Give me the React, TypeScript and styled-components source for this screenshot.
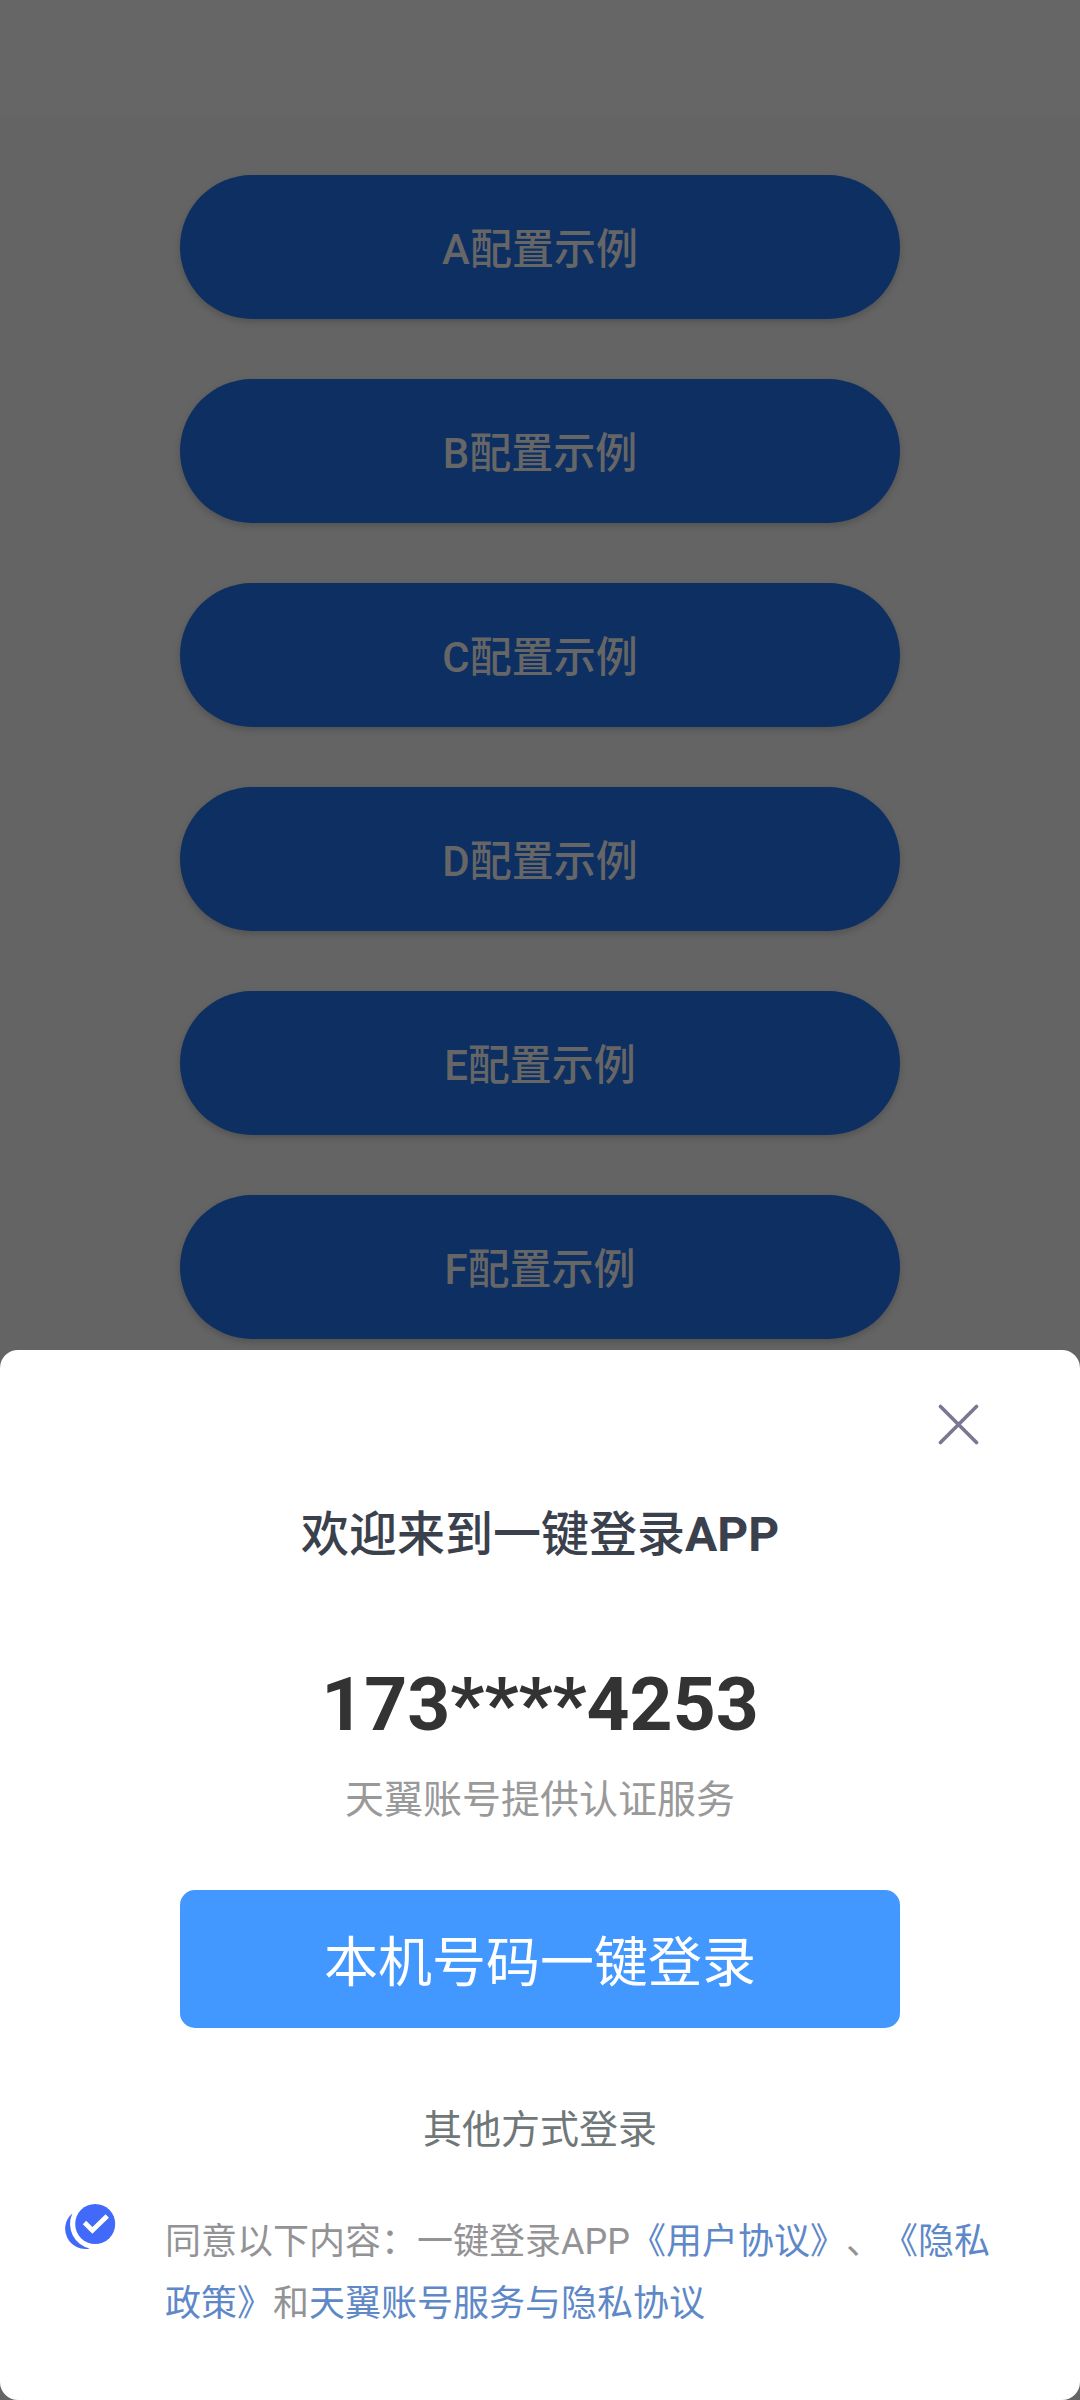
import React from "react";
import styled, { createGlobalStyle } from "styled-components";

const GlobalStyle = createGlobalStyle`
  * { box-sizing: border-box; }
  body {
    margin: 0;
    background: #646464;
    font-family: Roboto, "Noto Sans CJK SC", sans-serif;
  }
  button { font-family: inherit; border: 0; padding: 0; }
`;

const Screen = styled.div`
  width: 1080px;
  height: 2400px;
  overflow: hidden;
  display: flex;
  flex-direction: column;
  background: #646464;
`;

const StatusBar = styled.div`
  height: 115px;
  flex: none;
  background: #666666;
`;

const ConfigList = styled.main`
  height: 1235px;
  flex: none;
  padding-top: 60px;
  display: flex;
  flex-direction: column;
  align-items: center;
  gap: 60px;
`;

const ConfigButton = styled.button`
  width: 720px;
  height: 144px;
  flex: none;
  border-radius: 72px;
  background: #0e2f62;
  color: #666666;
  font-size: 42px;
  font-weight: 500;
  line-height: 50px;
  padding-top: 5px;
  box-shadow: 0 3px 7px rgba(0, 0, 0, 0.18);
`;

const SheetArea = styled.div`
  flex: 1;
  display: flex;
`;

const Sheet = styled.section`
  flex: 1;
  display: flex;
  flex-direction: column;
  align-items: center;
  background: #ffffff;
  border-radius: 18px;
`;

const SheetHeader = styled.header`
  width: 100%;
  height: 149px;
  padding: 54px 100px 0 0;
  display: flex;
  justify-content: flex-end;
`;

const CloseButton = styled.button`
  width: 42px;
  height: 42px;
  background: none;
  display: flex;
`;

const Title = styled.h1`
  margin: 0;
  height: 72px;
  font-size: 48px;
  line-height: 72px;
  font-weight: 500;
  color: #3b404d;
  white-space: nowrap;
`;

const Strong = styled.span`
  font-weight: 700;
`;

const PhoneNumber = styled.div`
  margin-top: 83px;
  height: 100px;
  font-size: 75px;
  line-height: 100px;
  font-weight: 700;
  color: #333333;
`;

const Provider = styled.div`
  margin-top: 16px;
  height: 60px;
  font-size: 39px;
  line-height: 60px;
  color: #999999;
`;

const LoginButton = styled.button`
  margin-top: 60px;
  width: 720px;
  height: 138px;
  flex: none;
  border-radius: 15px;
  background: #4398ff;
  color: #ffffff;
  font-size: 54px;
  line-height: 72px;
  padding-top: 9px;
`;

const OtherLogin = styled.button`
  margin-top: 72px;
  height: 60px;
  background: none;
  font-size: 39px;
  line-height: 60px;
  color: #6f7779;
`;

const Agreement = styled.div`
  width: 100%;
  margin-top: 44px;
  padding-left: 64px;
  display: flex;
  gap: 49px;
`;

const CheckBadge = styled.svg`
  width: 52px;
  height: 52px;
  flex: none;
`;

const AgreementText = styled.p`
  margin: 7px 0 0;
  font-size: 36px;
  line-height: 62px;
  color: #939396;
  white-space: nowrap;
  text-spacing-trim: space-all;
`;

const Link = styled.span`
  color: #5e88c7;
`;

const configs = ["A", "B", "C", "D", "E", "F"];

export default function App() {
  return (
    <>
      <GlobalStyle />
      <Screen lang="zh-CN">
        <StatusBar />
        <ConfigList>
          {configs.map((name) => (
            <ConfigButton key={name}>{name}配置示例</ConfigButton>
          ))}
        </ConfigList>
        <SheetArea>
          <Sheet>
            <SheetHeader>
              <CloseButton aria-label="关闭">
                <svg width="42" height="42" viewBox="0 0 42 42">
                  <path
                    d="M2.5 2.5 L38.5 38.5 M38.5 2.5 L2.5 38.5"
                    stroke="#7a7791"
                    strokeWidth="3.6"
                    strokeLinecap="round"
                  />
                </svg>
              </CloseButton>
            </SheetHeader>
            <Title>
              欢迎来到一键登录<Strong>APP</Strong>
            </Title>
            <PhoneNumber>173****4253</PhoneNumber>
            <Provider>天翼账号提供认证服务</Provider>
            <LoginButton>本机号码一键登录</LoginButton>
            <OtherLogin>其他方式登录</OtherLogin>
            <Agreement>
              <CheckBadge viewBox="0 0 52 52">
                <path
                  d="M8.3 9.6 A20 20 0 0 0 25.7 44.4 A25 25 0 0 1 8.3 9.6 Z"
                  fill="#4169fa"
                />
                <circle cx="31.2" cy="20" r="20" fill="#4169fa" />
                <path
                  d="M20.5 18.5 L28.4 26.4 L43.2 12"
                  fill="none"
                  stroke="#ffffff"
                  strokeWidth="4.8"
                />
              </CheckBadge>
              <AgreementText>
                同意以下内容：一键登录APP<Link>《用户协议》</Link>、<Link>《隐私</Link>
                <br />
                <Link>政策》</Link>和<Link>天翼账号服务与隐私协议</Link>
              </AgreementText>
            </Agreement>
          </Sheet>
        </SheetArea>
      </Screen>
    </>
  );
}
